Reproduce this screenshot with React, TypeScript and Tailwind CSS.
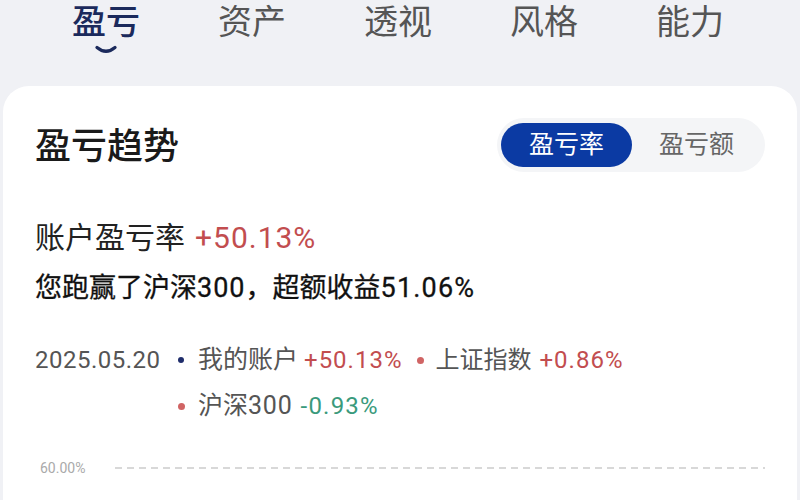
import React from "react";

const tabs = ["盈亏", "资产", "透视", "风格", "能力"];

export default function App() {
  return (
    <div className="w-[800px] h-[500px] overflow-hidden bg-[#f0f1f5] font-['Roboto','Noto_Sans_CJK_SC',sans-serif]">
      {/* Top tabs */}
      <div className="flex pl-[72px] gap-[78px] h-[86px]">
        {tabs.map((t, i) => (
          <div key={t} className="flex flex-col items-center">
            <div
              className={
                "text-[34px] leading-[44px] " +
                (i === 0 ? "text-[#1b2a5c] font-medium" : "text-[#555]")
              }
            >
              {t}
            </div>
            {i === 0 && (
              <svg width="24" height="9" viewBox="0 0 24 9" className="mt-[1px]">
                <path d="M3 2.5 Q12 10 21 2.5" stroke="#1b2a5c" strokeWidth="3.2" fill="none" strokeLinecap="round" />
              </svg>
            )}
          </div>
        ))}
      </div>

      {/* Card */}
      <div className="mx-[3px] h-[500px] rounded-t-[26px] bg-white px-[32px] pt-[32px]">
        {/* Title row */}
        <div className="flex h-[54px] items-center justify-between">
          <div className="pt-[4px] text-[36px] leading-[44px] font-medium text-[#1a1a1a]">盈亏趋势</div>
          <div className="flex h-[54px] w-[268px] items-center rounded-full bg-[#f4f5f7] p-[4px]">
            <div className="flex h-[44px] w-[131px] items-center justify-center rounded-full bg-[#0b3aa3] text-[25px] text-white">
              盈亏率
            </div>
            <div className="flex h-[44px] flex-1 items-center justify-center text-[25px] text-[#666]">
              盈亏额
            </div>
          </div>
        </div>

        {/* Rate */}
        <div className="mt-[46px] flex h-[38px] items-center text-[30px] text-[#222]">
          <span>账户盈亏率</span>
          <span className="ml-[10px] tracking-[1px] text-[#c24d4f]">+50.13%</span>
        </div>
        <div className="mt-[15px] flex h-[34px] items-center text-[27px] text-[#111] [-webkit-text-stroke:0.3px_#111]">
          <span>您跑赢了沪深</span>
          <span className="tracking-[1px]">300</span>
          <span>，超额收益</span>
          <span className="tracking-[1.2px]">51.06%</span>
        </div>

        {/* Legend */}
        <div className="mt-[39px] flex h-[32px] items-center text-[24px] text-[#555]">
          <div className="w-[143px] tracking-[0.5px]">2025.05.20</div>
          <span className="h-[6px] w-[6px] rounded-full bg-[#1f2d6b]" />
          <span className="ml-[14px] text-[25px]">我的账户</span>
          <span className="ml-[6px] tracking-[1px] text-[#c24d4f]">+50.13%</span>
          <span className="ml-[14px] h-[7px] w-[7px] rounded-full bg-[#d06464]" />
          <span className="ml-[12px] text-[24px]">上证指数</span>
          <span className="ml-[8px] tracking-[1px] text-[#c24d4f]">+0.86%</span>
        </div>
        <div className="mt-[14px] flex h-[32px] items-center pl-[143px] text-[24px] text-[#555]">
          <span className="h-[7px] w-[7px] rounded-full bg-[#d06464]" />
          <span className="ml-[13px] text-[25px]">沪深</span>
          <span className="text-[25px] tracking-[0.8px]">300</span>
          <span className="ml-[8px] tracking-[1.2px] text-[#3a9a7c]">-0.93%</span>
        </div>

        {/* Chart axis */}
        <div className="mt-[36px] flex h-[20px] items-center">
          <div className="ml-[5px] w-[75px] text-[14px] text-[#aaa]">60.00%</div>
          <svg width="652" height="4" className="block">
            <line x1="0" y1="2" x2="652" y2="2" stroke="#ccc" strokeWidth="1.5" strokeDasharray="7 5" />
          </svg>
        </div>
      </div>
    </div>
  );
}
